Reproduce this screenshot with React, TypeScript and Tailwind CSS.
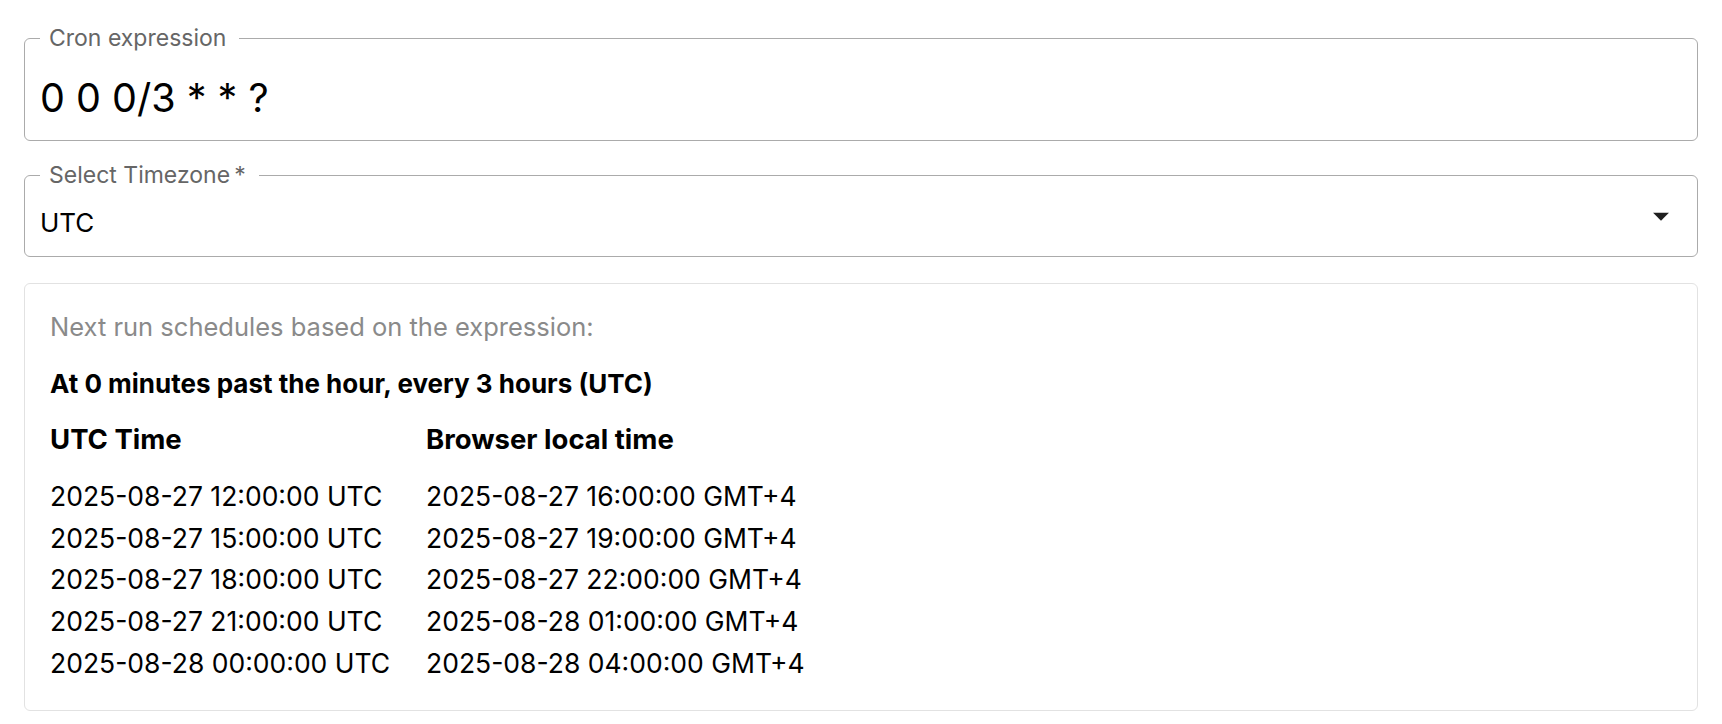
import React from "react";

const utcRows = [
  "2025-08-27 12:00:00 UTC",
  "2025-08-27 15:00:00 UTC",
  "2025-08-27 18:00:00 UTC",
  "2025-08-27 21:00:00 UTC",
  "2025-08-28 00:00:00 UTC",
];

const localRows = [
  "2025-08-27 16:00:00 GMT+4",
  "2025-08-27 19:00:00 GMT+4",
  "2025-08-27 22:00:00 GMT+4",
  "2025-08-28 01:00:00 GMT+4",
  "2025-08-28 04:00:00 GMT+4",
];

const OutlinedField = ({
  label,
  className,
  children,
}: {
  label: string;
  className: string;
  children: React.ReactNode;
}) => (
  <div
    className={`relative rounded-[6px] border border-[#ababab] bg-white ${className}`}
  >
    {/* floating label over the border */}
    <span className="absolute left-[15px] top-[-12px] bg-white pl-[9px] pr-[13px] text-[23px] leading-[23px] text-[#666]">
      {label}
    </span>
    {children}
  </div>
);

const App = () => {
  return (
    <div
      className="flex flex-col bg-white px-[24px] pt-[38px] pb-[14px] text-black"
      style={{ fontFamily: "Inter, 'Noto Sans', sans-serif" }}
    >
      {/* Cron expression */}
      <OutlinedField label="Cron expression" className="h-[103px] pl-[15px] pt-[40px]">
        <div className="text-[39.5px] leading-none">0 0 0/3 * * ?</div>
      </OutlinedField>

      {/* Timezone select */}
      <OutlinedField
        label={"Select Timezone\u2009*"}
        className="mt-[34px] flex h-[82px] items-center justify-between pl-[15px] pr-[17px]"
      >
        <div className="pt-[14px] text-[26px] leading-none">UTC</div>
        <svg viewBox="0 0 24 24" className="h-[38px] w-[38px]" fill="#1f1f1f">
          <path d="M7 10l5 5 5-5z" />
        </svg>
      </OutlinedField>

      {/* Schedule panel */}
      <div className="mt-[26px] h-[428px] rounded-[6px] border border-[#e2e2e2] px-[25px] pt-[30px]">
        <div className="text-[25.5px] leading-none text-[#8a8a8a]">
          Next run schedules based on the expression:
        </div>
        <div className="mt-[31px] text-[26px] font-bold leading-none">
          At 0 minutes past the hour, every 3 hours (UTC)
        </div>
        <div className="mt-[29px] grid grid-cols-[376px_auto]">
          <div className="text-[27.5px] font-bold leading-none">UTC Time</div>
          <div className="text-[27.5px] font-bold leading-none">Browser local time</div>
        </div>
        <div className="mt-[23px] grid grid-cols-[376px_auto] text-[26.5px] leading-[41.7px]">
          <div className="flex flex-col">
            {utcRows.map((r) => (
              <div key={r}>{r}</div>
            ))}
          </div>
          <div className="flex flex-col">
            {localRows.map((r) => (
              <div key={r}>{r}</div>
            ))}
          </div>
        </div>
      </div>
    </div>
  );
};

export default App;
